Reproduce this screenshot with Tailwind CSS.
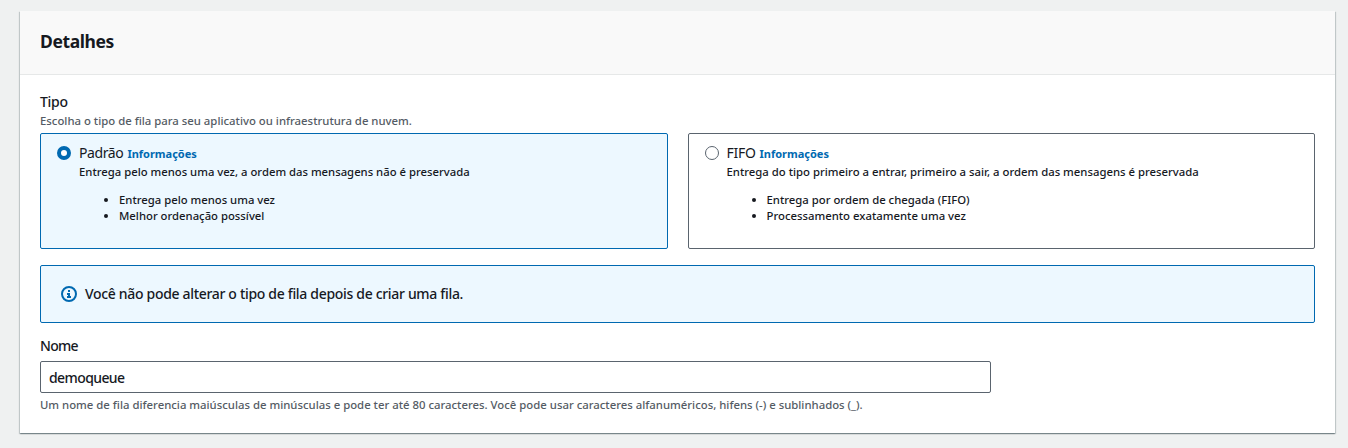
<!DOCTYPE html>
<html lang="pt-BR">
<head>
<meta charset="utf-8">
<title>Detalhes</title>
<script src="https://cdn.jsdelivr.net/npm/@tailwindcss/browser@4"></script>
</head>
<body class="h-[448px] overflow-hidden bg-[#eff1f1] px-5 pt-[11px] font-['Noto_Sans',sans-serif] text-sm leading-[22px] text-[#16191f]">
<main class="h-[422px] w-[1315px] bg-white shadow-[0_1px_1px_0_rgba(0,28,36,0.3),1px_1px_1px_0_rgba(0,28,36,0.15),-1px_1px_1px_0_rgba(0,28,36,0.15)]">
  <header class="h-16 border-b border-[#e6e8e8] bg-[#f9f9f9] px-5 pt-[19px]">
    <h2 class="text-[17.5px] font-bold tracking-[-0.4px]">Detalhes</h2>
  </header>
  <div class="px-5 pt-4">
    <div class="font-medium tracking-[-0.3px]">Tipo</div>
    <div class="text-[11.35px] leading-4 font-medium text-[#545b64]">Escolha o tipo de fila para seu aplicativo ou infraestrutura de nuvem.</div>
    <div class="mt-1 grid grid-cols-2 gap-5">
      <div class="flex h-[116px] gap-2 rounded-xs border border-[#0069b1] bg-[#edf8ff] px-4 py-2">
        <svg class="mt-1 size-[14px] shrink-0" viewBox="0 0 14 14"><circle cx="7" cy="7" r="5" fill="#fff" stroke="#0069b1" stroke-width="4"/></svg>
        <div>
          <div class="flex h-[22px] gap-1"><span class="tracking-[-0.4px]">Padrão</span><span class="pt-px text-[11px] leading-[22px] font-bold text-[#0069b1]">Informações</span></div>
          <div class="text-[11.3px] leading-4 font-medium">
            <p>Entrega pelo menos uma vez, a ordem das mensagens não é preservada</p>
            <ul class="mt-3 list-disc pl-10">
              <li>Entrega pelo menos uma vez</li>
              <li>Melhor ordenação possível</li>
            </ul>
          </div>
        </div>
      </div>
      <div class="flex h-[116px] gap-2 rounded-xs border border-[#5a646e] px-4 py-2">
        <svg class="mt-1 size-[14px] shrink-0" viewBox="0 0 14 14"><circle cx="7" cy="7" r="6.5" fill="#fff" stroke="#5a646e"/></svg>
        <div>
          <div class="flex h-[22px] gap-1"><span class="tracking-[-0.3px]">FIFO</span><span class="pt-px text-[11px] leading-[22px] font-bold text-[#0069b1]">Informações</span></div>
          <div class="text-[11.33px] leading-4 font-medium">
            <p>Entrega do tipo primeiro a entrar, primeiro a sair, a ordem das mensagens é preservada</p>
            <ul class="mt-3 list-disc pl-10">
              <li>Entrega por ordem de chegada (FIFO)</li>
              <li>Processamento exatamente uma vez</li>
            </ul>
          </div>
        </div>
      </div>
    </div>
    <div class="mt-4 flex h-[58px] items-center gap-2 rounded-xs border border-[#0069b1] bg-[#edf8ff] px-5">
      <svg class="size-4 shrink-0" viewBox="0 0 16 16" fill="none" stroke="#0069b1" stroke-width="2"><circle cx="8" cy="8" r="7"/><path d="M7 5h2M6 8h2.2M8 7v4M6 11h4"/></svg>
      <span class="font-medium tracking-[-0.32px]">Você não pode alterar o tipo de fila depois de criar uma fila.</span>
    </div>
    <label for="name" class="mt-3 block font-medium tracking-[-0.7px]">Nome</label>
    <input id="name" type="text" value="demoqueue" class="mt-1 block h-8 w-[951px] rounded-xs border border-[#5a646e] bg-white px-2 font-medium tracking-[-0.6px]">
    <div class="mt-1 text-[11.35px] leading-4 font-medium text-[#545b64]">Um nome de fila diferencia maiúsculas de minúsculas e pode ter até 80 caracteres. Você pode usar caracteres alfanuméricos, hifens (-) e sublinhados (_).</div>
  </div>
</main>
</body>
</html>
